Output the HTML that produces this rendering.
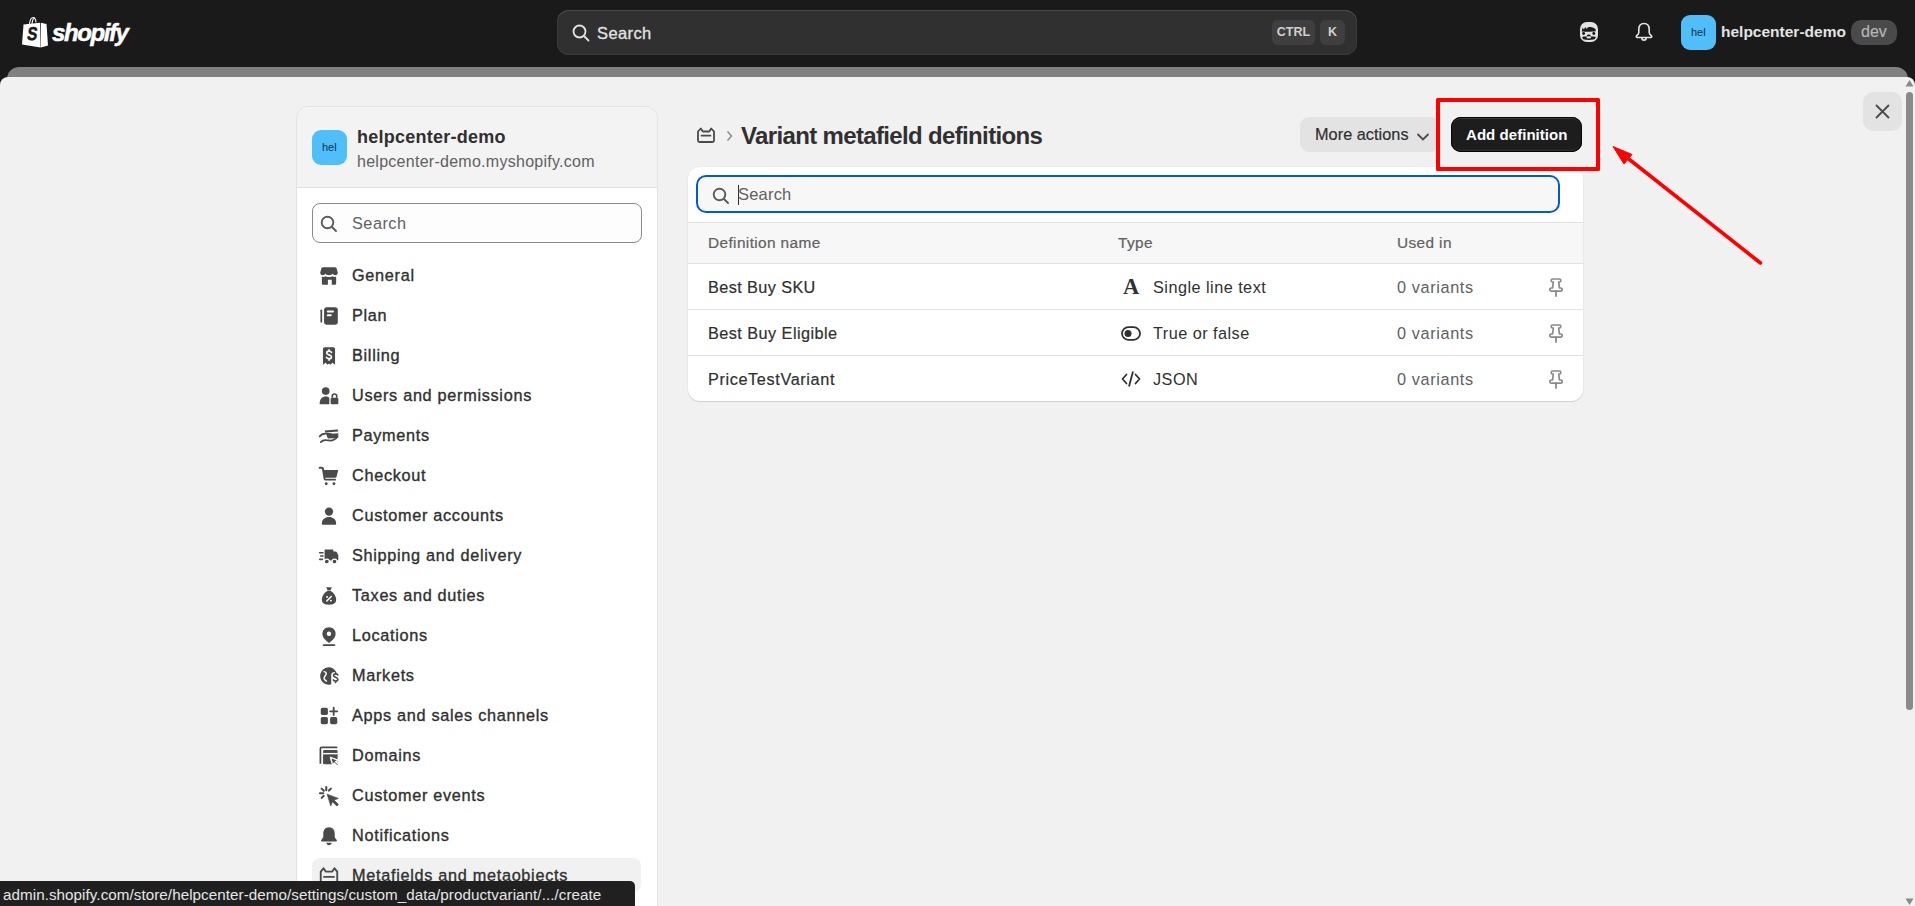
<!DOCTYPE html>
<html><head><meta charset="utf-8">
<style>
*{box-sizing:border-box;margin:0;padding:0}
html,body{width:1915px;height:906px;overflow:hidden;background:#1a1a1a;font-family:"Liberation Sans",sans-serif;color:#303030}
.abs{position:absolute}
.t{position:absolute;white-space:nowrap;line-height:1}
/* top bar */
#logo-bag{left:21px;top:16px}
#logo-txt{left:52px;top:21px;font-size:24px;font-weight:700;font-style:italic;color:#fff;letter-spacing:-1.4px;-webkit-text-stroke:0.5px #fff}
#gsearch{left:557px;top:10px;width:800px;height:45px;background:#303030;border-radius:12px;box-shadow:inset 0 1px 0 #4a4a4a,inset 0 0 0 1px #3a3a3a}
.kbd{position:absolute;top:10px;height:25px;background:#3f3f3f;border-radius:6px;color:#cfcfcf;font-size:12.5px;font-weight:700;line-height:25px;text-align:center}
#strip{left:7px;top:67px;width:1901px;height:30px;background:#808080;border-radius:12px 12px 0 0}
#modal{left:0;top:77px;width:1915px;height:840px;background:#f1f1f1;border-radius:8px 8px 0 0}
/* sidebar */
#side{left:297px;top:107px;width:360px;height:830px;background:#fff;border-radius:12px;box-shadow:0 0 0 1px #e3e3e3;overflow:hidden}
#side-h{left:0;top:0;width:360px;height:81px;background:#f3f3f3;border-bottom:1px solid #e3e3e3}
.nav{position:absolute;left:15px;width:329px;height:34px}
.nav svg{position:absolute;left:6px;top:7px}
.nav span{position:absolute;left:40px;top:9px;font-size:16.25px;letter-spacing:0.7px;color:#303030;white-space:nowrap;line-height:1;-webkit-text-stroke:0.35px #303030}
/* main */
#title{left:741px;top:124px;font-size:24px;font-weight:700;color:#303030;letter-spacing:-0.65px}
#more{left:1300px;top:117px;width:140px;height:35px;background:#e3e3e3;border-radius:9px}
#add{left:1451px;top:117px;width:131px;height:35px;background:#1d1d1d;border-radius:10px;box-shadow:inset 0 0 0 1px #050505,inset 0 2px 0 #3a3a3a,inset 0 -2.5px 0 #2c2c2c}
#redbox{left:1436px;top:97.5px;width:163.5px;height:73.5px;border:4px solid #f00;border-radius:1.5px}
#card{left:688px;top:167px;width:895px;height:234px;background:#fff;border-radius:12px;box-shadow:0 1px 1px rgba(0,0,0,.12),0 0 0 1px #ececec;overflow:hidden}
#tsearch{left:8px;top:8px;width:864px;height:38px;background:#f7f7f7;border:2px solid #005bd3;border-radius:10px}
#thead{left:0;top:55px;width:895px;height:42px;background:#f7f7f7;border-top:1px solid #e3e3e3;border-bottom:1px solid #e3e3e3}
.row{position:absolute;left:0;width:895px;height:46px;border-bottom:1px solid #e3e3e3}
.row .t{top:14.5px;font-size:16.25px;letter-spacing:0.3px}
#close{left:1863px;top:92px;width:39px;height:39px;background:#e3e3e3;border-radius:10px}
#sb-thumb{left:1906px;top:92px;width:7px;height:618px;background:#8a8a8a;border-radius:4px}
#status{left:0;top:881px;width:635px;height:25px;background:#202020;border-radius:0 5px 0 0}
#status span{position:absolute;left:3px;top:6px;font-size:15.2px;letter-spacing:0.06px;color:#e6e6e6;white-space:nowrap;line-height:1}
</style></head><body>

<!-- TOP BAR -->
<svg class="abs" id="logo-bag" width="28" height="32" viewBox="0 0 28 32">
  <path d="M2.5 8.5 L19 6.8 L19.5 31.5 L1 28.5 Z" fill="#fff"/>
  <path d="M19.8 6.8 L25.5 8 L27 29.5 L19.8 31.5 Z" fill="#fff"/>
  <path d="M8.5 8.5 C8.8 4 10.5 1.5 12.3 1.5 C13.8 1.5 14.8 3.5 15 6.5 M11 8 C11.3 4.5 12.3 2.5 13.5 2.2" stroke="#fff" stroke-width="1.1" fill="none"/>
  <text x="0" y="0" font-family="Liberation Sans" font-weight="700" font-size="18.5" fill="#1a1a1a" stroke="#1a1a1a" stroke-width="0.5" transform="translate(5.5,24.4) skewX(-8) scale(0.82,1)">S</text>
</svg>
<div class="t" id="logo-txt">shopify</div>

<div class="abs" id="gsearch">
  <svg class="abs" style="left:15px;top:14px" width="18" height="18" viewBox="0 0 18 18"><circle cx="7.5" cy="7.5" r="6" stroke="#e3e3e3" stroke-width="1.8" fill="none"/><path d="M12 12 L16.5 16.5" stroke="#e3e3e3" stroke-width="1.8" stroke-linecap="round"/></svg>
  <div class="t" style="left:40px;top:14.5px;font-size:16.5px;color:#e3e3e3;letter-spacing:0.4px;-webkit-text-stroke:0.3px #e3e3e3">Search</div>
  <div class="kbd" style="left:715px;width:43px">CTRL</div>
  <div class="kbd" style="left:763px;width:25px">K</div>
</div>

<!-- face icon -->
<svg class="abs" style="left:1578px;top:21px" width="22" height="22" viewBox="0 0 22 22">
  <rect x="2" y="1" width="18" height="20" rx="7" fill="#e3e3e3"/>
  <path d="M3.6 10.6 L4.6 6.6 L5.8 8.6 L7.4 6 L8.6 8 L10 6.3 C13 5.6 16.2 6.2 17.8 8.8 L17.6 10.3 C15.5 10.6 12.5 10.8 10.6 10.8 C8 10.8 5.5 10.8 3.6 10.6 Z" fill="#1a1a1a"/>
  <circle cx="5.6" cy="12.5" r="1.45" fill="#1a1a1a"/><circle cx="15.8" cy="12.5" r="1.45" fill="#1a1a1a"/>
  <ellipse cx="10.8" cy="14.6" rx="1.9" ry="1.1" fill="#1a1a1a"/>
  <path d="M4.2 16 C6.5 15.3 9 15.6 10.8 15.9 C12.6 15.6 15.2 15.3 17.8 16 C17.5 17.6 16.8 18.4 15.5 18.6 C12.5 19 9 19 6.2 18.6 C5 18.4 4.4 17.6 4.2 16 Z" fill="#1a1a1a"/>
  <ellipse cx="10.8" cy="16.5" rx="2.4" ry="1.1" fill="#e3e3e3"/>
</svg>
<!-- bell -->
<svg class="abs" style="left:1634px;top:22px" width="20" height="20" viewBox="0 0 20 20">
  <path d="M10 1.5 C6.5 1.5 4.8 4 4.8 7.5 L4.8 10.5 C4.8 12 3.5 12.8 2.5 14 C2 14.6 2.3 15.5 3.2 15.5 L16.8 15.5 C17.7 15.5 18 14.6 17.5 14 C16.5 12.8 15.2 12 15.2 10.5 L15.2 7.5 C15.2 4 13.5 1.5 10 1.5 Z" stroke="#e3e3e3" stroke-width="1.6" fill="none" stroke-linejoin="round"/>
  <path d="M7.8 16 C7.8 18.8 12.2 18.8 12.2 16" stroke="#e3e3e3" stroke-width="1.6" fill="none"/>
</svg>
<div class="abs" style="left:1681px;top:15px;width:35px;height:35px;background:#50bef9;border-radius:9px"></div>
<div class="t" style="left:1691px;top:27px;font-size:11px;color:#0b3050">hel</div>
<div class="t" style="left:1721px;top:24px;font-size:15.5px;font-weight:700;color:#e3e3e3">helpcenter-demo</div>
<div class="abs" style="left:1851px;top:20px;width:46px;height:25px;background:#4a4a4a;border-radius:10px"></div>
<div class="t" style="left:1861px;top:24px;font-size:16px;color:#b5b5b5;-webkit-text-stroke:0.2px #b5b5b5">dev</div>

<div class="abs" id="strip"></div>
<div class="abs" id="modal"></div>

<!-- SIDEBAR -->
<div class="abs" id="side">
  <div class="abs" id="side-h"></div>
  <div class="abs" style="left:15px;top:23px;width:35px;height:35px;background:#50bef9;border-radius:9px"></div>
  <div class="t" style="left:25px;top:34.5px;font-size:11px;color:#0b3050">hel</div>
  <div class="t" style="left:60px;top:21px;font-size:18px;font-weight:700;color:#303030;letter-spacing:0.25px">helpcenter-demo</div>
  <div class="t" style="left:60px;top:47px;font-size:16px;color:#616161;letter-spacing:0.27px">helpcenter-demo.myshopify.com</div>
  <div class="abs" style="left:15px;top:96px;width:330px;height:40px;border:1px solid #8a8a8a;border-radius:8px;background:#fdfdfd"></div>
  <svg class="abs" style="left:23px;top:108px" width="18" height="18" viewBox="0 0 18 18"><circle cx="7.5" cy="7.5" r="5.8" stroke="#5c5c5c" stroke-width="1.9" fill="none"/><path d="M12 12 L16 16" stroke="#5c5c5c" stroke-width="1.9" stroke-linecap="round"/></svg>
  <div class="t" style="left:55px;top:108px;font-size:16.25px;color:#616161;letter-spacing:0.5px">Search</div>
  <div class="nav" style="top:151px"><svg width="22" height="22" viewBox="0 0 20 20"><path d="M3 3.5 C3 2.7 3.6 2 4.5 2 L15.5 2 C16.4 2 17 2.7 17 3.5 L18 7 C18 8.5 16.8 9.3 15.6 9.3 C14.6 9.3 13.8 8.7 13.3 8 C12.8 8.7 11.9 9.3 10 9.3 C8.1 9.3 7.2 8.7 6.7 8 C6.2 8.7 5.4 9.3 4.4 9.3 C3.2 9.3 2 8.5 2 7 Z" fill="#4a4a4a"/><path d="M3.5 10.5 L3.5 16.5 C3.5 17.3 4.1 18 5 18 L9 18 L9 13.5 L12.5 13.5 L12.5 18 L15 18 C15.9 18 16.5 17.3 16.5 16.5 L16.5 10.5 C15.5 11 14 10.9 13.3 10.2 C12 11.2 8 11.2 6.7 10.2 C6 10.9 4.5 11 3.5 10.5 Z" fill="#4a4a4a"/></svg><span>General</span></div>
  <div class="nav" style="top:191px"><svg width="22" height="22" viewBox="0 0 20 20"><rect x="5.5" y="2" width="12.5" height="16" rx="2.5" fill="#4a4a4a"/><rect x="8" y="5" width="6.5" height="1.8" rx=".9" fill="#fff"/><rect x="8" y="8.5" width="4.5" height="1.8" rx=".9" fill="#fff"/><rect x="2.2" y="4" width="1.6" height="12" rx=".8" fill="#4a4a4a"/></svg><span>Plan</span></div>
  <div class="nav" style="top:231px"><svg width="22" height="22" viewBox="0 0 20 20"><path d="M4.5 3.5 C4.5 2.7 5.2 2 6 2 L14 2 C14.8 2 15.5 2.7 15.5 3.5 L15.5 18 L13.2 16.2 L11.2 18 L10 16.8 L8.8 18 L6.8 16.2 L4.5 18 Z" fill="#4a4a4a"/><path d="M12.2 6.8 C11.8 6 11 5.6 10 5.6 C8.8 5.6 7.9 6.3 7.9 7.3 C7.9 9.5 12.2 8.5 12.2 10.8 C12.2 11.8 11.2 12.4 10 12.4 C9 12.4 8.1 12 7.7 11.2 M10 4.3 L10 5.6 M10 12.4 L10 13.8" stroke="#fff" stroke-width="1.5" fill="none" stroke-linecap="round"/></svg><span>Billing</span></div>
  <div class="nav" style="top:271px"><svg width="22" height="22" viewBox="0 0 20 20"><circle cx="7" cy="5.5" r="3.5" fill="#4a4a4a"/><path d="M1.5 17 C1.5 12.5 4 10.5 7 10.5 C8.5 10.5 9.5 11 10.3 11.6 L10.3 17.5 L2 17.5 C1.7 17.5 1.5 17.3 1.5 17 Z" fill="#4a4a4a"/><rect x="11.5" y="11.5" width="7" height="6" rx="1.2" fill="#4a4a4a"/><path d="M13 11.5 L13 10 C13 8.8 13.8 8.2 15 8.2 C16.2 8.2 17 8.8 17 10 L17 11.5" stroke="#4a4a4a" stroke-width="1.5" fill="none"/></svg><span>Users and permissions</span></div>
  <div class="nav" style="top:311px"><svg width="22" height="22" viewBox="0 0 20 20"><path d="M6 5 L17.5 4 C18 4 18.3 4.3 18.3 4.8 L18.5 11 C18.5 11.5 18.2 11.8 17.7 11.8 L9 12.2" fill="#4a4a4a"/><path d="M7 6.8 L18.4 6 L18.4 7.6 L7 8.4 Z" fill="#fff"/><path d="M1.5 10.5 C3 8 5 7.5 8 7.8 L12 8.2 C13 8.3 13 9.8 12 9.8 L9 9.8 M2.5 15.5 C4 14 5.5 13.5 7.5 13.8 L11.5 14.2 C13 14.3 15 13 16.5 12" stroke="#4a4a4a" stroke-width="1.6" fill="none" stroke-linecap="round"/></svg><span>Payments</span></div>
  <div class="nav" style="top:351px"><svg width="22" height="22" viewBox="0 0 20 20"><path d="M1.5 2.5 L3.5 2.5 C4 2.5 4.4 2.8 4.5 3.3 L6 12.5 C6.1 13 6.5 13.3 7 13.3 L15.5 13.3" stroke="#4a4a4a" stroke-width="1.8" fill="none" stroke-linecap="round"/><path d="M5 4.5 L17.5 4.5 C18 4.5 18.4 5 18.2 5.5 L16.8 10.8 C16.7 11.2 16.3 11.5 15.8 11.5 L6.2 11.5 Z" fill="#4a4a4a"/><circle cx="7.5" cy="17" r="1.3" fill="#4a4a4a"/><circle cx="14.5" cy="17" r="1.3" fill="#4a4a4a"/></svg><span>Checkout</span></div>
  <div class="nav" style="top:391px"><svg width="22" height="22" viewBox="0 0 20 20"><circle cx="10" cy="6" r="3.8" fill="#4a4a4a"/><path d="M3.5 17 C3.5 13 6.5 11 10 11 C13.5 11 16.5 13 16.5 17 C16.5 17.5 16.2 18 15.7 18 L4.3 18 C3.8 18 3.5 17.5 3.5 17 Z" fill="#4a4a4a"/></svg><span>Customer accounts</span></div>
  <div class="nav" style="top:431px"><svg width="22" height="22" viewBox="0 0 20 20"><path d="M6 4 L13 4 C13.6 4 14 4.4 14 5 L14 6 L16 6 C16.5 6 16.9 6.2 17.1 6.6 L18.5 9.4 L18.5 13 C18.5 13.6 18.1 14 17.5 14 L6 14 Z" fill="#4a4a4a"/><circle cx="8" cy="15" r="2.2" fill="#4a4a4a" stroke="#fff" stroke-width="1"/><circle cx="15" cy="15" r="2.2" fill="#4a4a4a" stroke="#fff" stroke-width="1"/><path d="M1.5 7 L4.5 7 M2.5 10 L4.5 10 M1.5 13 L4 13" stroke="#4a4a4a" stroke-width="1.5" stroke-linecap="round"/></svg><span>Shipping and delivery</span></div>
  <div class="nav" style="top:471px"><svg width="22" height="22" viewBox="0 0 20 20"><path d="M7.5 2 L12.5 2 L11.3 5 L8.7 5 Z" fill="#4a4a4a"/><path d="M8.5 5.5 L11.5 5.5 C14.5 7 16.5 10.5 16.5 13.5 C16.5 16.5 14 18 10 18 C6 18 3.5 16.5 3.5 13.5 C3.5 10.5 5.5 7 8.5 5.5 Z" fill="#4a4a4a"/><path d="M8 14.5 L12 10.5" stroke="#fff" stroke-width="1.4" stroke-linecap="round"/><circle cx="8.3" cy="10.8" r=".9" fill="#fff"/><circle cx="11.7" cy="14.2" r=".9" fill="#fff"/></svg><span>Taxes and duties</span></div>
  <div class="nav" style="top:511px"><svg width="22" height="22" viewBox="0 0 20 20"><path d="M10 2 C6.5 2 4 4.6 4 8 C4 11.5 7 14 9.3 15.8 C9.7 16.1 10.3 16.1 10.7 15.8 C13 14 16 11.5 16 8 C16 4.6 13.5 2 10 2 Z" fill="#4a4a4a"/><circle cx="10" cy="8" r="2" fill="#fff"/><path d="M5 18.2 L15 18.2" stroke="#4a4a4a" stroke-width="1.6" stroke-linecap="round"/></svg><span>Locations</span></div>
  <div class="nav" style="top:551px"><svg width="22" height="22" viewBox="0 0 20 20"><path d="M10 2 C5.6 2 2 5.6 2 10 C2 14.4 5.6 18 10 18 C11 18 11.5 17.8 12 17.6 L12 9 C12 7.5 13.3 6.3 14.8 6.3 L16.5 6.3 C15 3.7 12.7 2 10 2 Z" fill="#4a4a4a"/><path d="M5 6 C6.5 6 7.5 7 7.5 8 C7.5 9.5 5.5 10 5.5 12 C5.5 13.5 7 14 8 15" stroke="#fff" stroke-width="1.3" fill="none"/><path d="M18 9 C17.5 8.3 16.8 8 16 8 C15 8 14.2 8.6 14.2 9.5 C14.2 11.5 18 10.8 18 13 C18 14 17 14.6 16 14.6 C15 14.6 14.3 14.2 13.9 13.5 M16 6.8 L16 8 M16 14.6 L16 16" stroke="#4a4a4a" stroke-width="1.5" fill="none" stroke-linecap="round"/></svg><span>Markets</span></div>
  <div class="nav" style="top:591px"><svg width="22" height="22" viewBox="0 0 20 20"><rect x="2.5" y="2.5" width="6.5" height="6.5" rx="1.5" fill="#4a4a4a"/><rect x="2.5" y="11" width="6.5" height="6.5" rx="1.5" fill="#4a4a4a"/><rect x="11" y="11" width="6.5" height="6.5" rx="1.5" fill="#4a4a4a"/><path d="M14.25 2.5 L14.25 9 M11 5.75 L17.5 5.75" stroke="#4a4a4a" stroke-width="1.7" stroke-linecap="round"/></svg><span>Apps and sales channels</span></div>
  <div class="nav" style="top:631px"><svg width="22" height="22" viewBox="0 0 20 20"><path d="M2.2 17 L2.2 3.2 C2.2 2.6 2.6 2.2 3.2 2.2 L17.5 2.2" stroke="#4a4a4a" stroke-width="1.6" fill="none"/><rect x="4.6" y="4.6" width="13.2" height="13" rx="1.2" fill="#4a4a4a"/><rect x="4.6" y="7.2" width="13.2" height="1.3" fill="#fff"/><path d="M11.3 11.2 L18.8 14 L16 15.1 L18.9 18 L17.6 19.3 L14.7 16.4 L13.6 19.2 Z" fill="#4a4a4a" stroke="#fff" stroke-width="1.3" stroke-linejoin="round"/></svg><span>Domains</span></div>
  <div class="nav" style="top:671px"><svg width="22" height="22" viewBox="0 0 20 20"><path d="M8.3 8.3 L18.5 12.2 L14.6 13.7 L18.6 17.7 L17.1 19.2 L13.1 15.2 L11.6 19.1 Z" fill="#4a4a4a" stroke="#4a4a4a" stroke-width="0.6" stroke-linejoin="round"/><path d="M7.5 1.8 L7.5 4.8 M1.8 7.5 L4.8 7.5 M3.3 3.3 L5.3 5.3 M11.7 3.3 L9.9 5.1 M3.3 11.7 L5.1 9.9" stroke="#4a4a4a" stroke-width="1.9" stroke-linecap="round"/></svg><span>Customer events</span></div>
  <div class="nav" style="top:711px"><svg width="22" height="22" viewBox="0 0 20 20"><path d="M10 2 C6.8 2 4.8 4.5 4.8 7.8 L4.8 10.5 C4.8 11.8 3.8 12.6 3 13.6 C2.5 14.3 3 15 3.8 15 L16.2 15 C17 15 17.5 14.3 17 13.6 C16.2 12.6 15.2 11.8 15.2 10.5 L15.2 7.8 C15.2 4.5 13.2 2 10 2 Z" fill="#4a4a4a"/><path d="M7.5 16.2 C7.8 17.6 8.8 18.3 10 18.3 C11.2 18.3 12.2 17.6 12.5 16.2 Z" fill="#4a4a4a"/></svg><span>Notifications</span></div>
  <div class="nav" style="top:751px;background:#f1f1f1;border-radius:8px"><svg width="22" height="22" viewBox="0 0 20 20"><path d="M2.5 6 L2.5 16 C2.5 17 3.3 17.5 4.2 17.5 L15.8 17.5 C16.7 17.5 17.5 17 17.5 16 L17.5 6 L15 3 L13 6 L7 6 L5 3 Z" stroke="#4a4a4a" stroke-width="1.7" fill="none" stroke-linejoin="round"/><path d="M5.5 10.8 L14.5 10.8" stroke="#4a4a4a" stroke-width="1.7" stroke-linecap="round"/></svg><span>Metafields and metaobjects</span></div>
</div>

<!-- MAIN -->
<svg class="abs" style="left:696px;top:126px" width="20" height="18" viewBox="0 0 20 18">
  <path d="M2 5.5 L2 14.8 C2 15.6 2.8 16 3.6 16 L16.4 16 C17.2 16 18 15.6 18 14.8 L18 5.5 L15.2 2.5 L13.2 5.5 L6.8 5.5 L4.8 2.5 Z" stroke="#4a4a4a" stroke-width="1.8" fill="none" stroke-linejoin="round"/>
  <path d="M5.5 9.6 L14.5 9.6" stroke="#4a4a4a" stroke-width="1.8" stroke-linecap="round"/>
</svg>
<svg class="abs" style="left:725px;top:130px" width="9" height="12" viewBox="0 0 9 12"><path d="M2.5 1.5 L6.5 6 L2.5 10.5" stroke="#8a8a8a" stroke-width="1.4" fill="none"/></svg>
<div class="t" id="title">Variant metafield definitions</div>

<div class="abs" id="more">
  <div class="t" style="left:15px;top:9px;font-size:16.25px;color:#303030;letter-spacing:0.05px;-webkit-text-stroke:0.2px #303030">More actions</div>
  <svg class="abs" style="left:116px;top:14.5px" width="14" height="10" viewBox="0 0 14 10"><path d="M2 2.5 L7 7.5 L12 2.5" stroke="#4a4a4a" stroke-width="1.8" fill="none" stroke-linecap="round"/></svg>
</div>
<div class="abs" id="add">
  <div class="t" style="left:15px;top:10px;font-size:15px;font-weight:700;color:#fff;letter-spacing:0.05px">Add definition</div>
</div>


<div class="abs" id="card">
  <div class="abs" id="tsearch"></div>
  <svg class="abs" style="left:24px;top:19.5px" width="18" height="18" viewBox="0 0 18 18"><circle cx="7.5" cy="7.5" r="5.8" stroke="#5c5c5c" stroke-width="1.9" fill="none"/><path d="M12 12 L16 16" stroke="#5c5c5c" stroke-width="1.9" stroke-linecap="round"/></svg>
  <div class="abs" style="left:50px;top:18px;width:1.3px;height:20px;background:#303030"></div>
  <div class="t" style="left:50px;top:19px;font-size:16.5px;color:#616161;letter-spacing:0.2px">Search</div>
  <div class="abs" id="thead"></div>
  <div class="t" style="left:20px;top:68px;font-size:15.4px;color:#616161;letter-spacing:0.38px;-webkit-text-stroke:0.2px #616161">Definition name</div>
  <div class="t" style="left:430px;top:68px;font-size:15.4px;color:#616161;letter-spacing:0.38px;-webkit-text-stroke:0.2px #616161">Type</div>
  <div class="t" style="left:709px;top:68px;font-size:15.4px;color:#616161;letter-spacing:0.38px;-webkit-text-stroke:0.2px #616161">Used in</div>
  <div class="row" style="top:97px"><div class="t" style="left:20px;color:#303030;letter-spacing:0.4px;-webkit-text-stroke:0.2px #303030">Best Buy SKU</div><div class="t" style="left:435px;top:12px;font-family:'Liberation Serif';font-weight:700;font-size:22.5px;color:#303030">A</div><div class="t" style="left:465px;color:#303030;letter-spacing:0.47px">Single line text</div><div class="t" style="left:709px;color:#616161;letter-spacing:0.63px">0 variants</div><svg class="abs" style="left:859px;top:13px" width="18" height="20" viewBox="0 0 18 20"><path d="M6.3 5 L5.6 5 C4.7 5 4.2 4.3 4.2 3.5 C4.2 2.6 4.8 2 5.6 2 L12.4 2 C13.2 2 13.8 2.6 13.8 3.5 C13.8 4.3 13.3 5 12.4 5 L11.7 5 L12.4 11 L13.5 11 C14.5 11 15.2 11.7 15.2 12.6 C15.2 13.5 14.5 14.2 13.5 14.2 L4.5 14.2 C3.5 14.2 2.8 13.5 2.8 12.6 C2.8 11.7 3.5 11 4.5 11 L5.6 11 Z" fill="none" stroke="#8a8a8a" stroke-width="1.7" stroke-linejoin="round"/><path d="M9 14.2 L9 19" stroke="#8a8a8a" stroke-width="1.8" stroke-linecap="round"/></svg></div>
  <div class="row" style="top:143px"><div class="t" style="left:20px;color:#303030;letter-spacing:0.45px;-webkit-text-stroke:0.2px #303030">Best Buy Eligible</div><svg class="abs" style="left:433px;top:16px" width="20" height="15" viewBox="0 0 20 15"><rect x="1" y="1.2" width="18" height="12.6" rx="6.3" stroke="#303030" stroke-width="1.8" fill="none"/><circle cx="7" cy="7.5" r="3.5" fill="#303030"/></svg><div class="t" style="left:465px;color:#303030;letter-spacing:0.47px">True or false</div><div class="t" style="left:709px;color:#616161;letter-spacing:0.63px">0 variants</div><svg class="abs" style="left:859px;top:13px" width="18" height="20" viewBox="0 0 18 20"><path d="M6.3 5 L5.6 5 C4.7 5 4.2 4.3 4.2 3.5 C4.2 2.6 4.8 2 5.6 2 L12.4 2 C13.2 2 13.8 2.6 13.8 3.5 C13.8 4.3 13.3 5 12.4 5 L11.7 5 L12.4 11 L13.5 11 C14.5 11 15.2 11.7 15.2 12.6 C15.2 13.5 14.5 14.2 13.5 14.2 L4.5 14.2 C3.5 14.2 2.8 13.5 2.8 12.6 C2.8 11.7 3.5 11 4.5 11 L5.6 11 Z" fill="none" stroke="#8a8a8a" stroke-width="1.7" stroke-linejoin="round"/><path d="M9 14.2 L9 19" stroke="#8a8a8a" stroke-width="1.8" stroke-linecap="round"/></svg></div>
  <div class="row" style="top:189px"><div class="t" style="left:20px;color:#303030;letter-spacing:0.62px;-webkit-text-stroke:0.2px #303030">PriceTestVariant</div><svg class="abs" style="left:433px;top:15px" width="20" height="16" viewBox="0 0 20 16"><path d="M5.5 3.5 L1.5 8 L5.5 12.5 M14.5 3.5 L18.5 8 L14.5 12.5 M11.8 1.2 L8.2 14.8" stroke="#303030" stroke-width="1.8" fill="none" stroke-linecap="round" stroke-linejoin="round"/></svg><div class="t" style="left:465px;color:#303030;letter-spacing:0.47px">JSON</div><div class="t" style="left:709px;color:#616161;letter-spacing:0.63px">0 variants</div><svg class="abs" style="left:859px;top:13px" width="18" height="20" viewBox="0 0 18 20"><path d="M6.3 5 L5.6 5 C4.7 5 4.2 4.3 4.2 3.5 C4.2 2.6 4.8 2 5.6 2 L12.4 2 C13.2 2 13.8 2.6 13.8 3.5 C13.8 4.3 13.3 5 12.4 5 L11.7 5 L12.4 11 L13.5 11 C14.5 11 15.2 11.7 15.2 12.6 C15.2 13.5 14.5 14.2 13.5 14.2 L4.5 14.2 C3.5 14.2 2.8 13.5 2.8 12.6 C2.8 11.7 3.5 11 4.5 11 L5.6 11 Z" fill="none" stroke="#8a8a8a" stroke-width="1.7" stroke-linejoin="round"/><path d="M9 14.2 L9 19" stroke="#8a8a8a" stroke-width="1.8" stroke-linecap="round"/></svg></div>
</div>

<div class="abs" id="redbox"></div>
<svg class="abs" style="left:0;top:0" width="1915" height="906" viewBox="0 0 1915 906">
  <path d="M1760.5 263 L1625 156" stroke="#f00" stroke-width="3.6" stroke-linecap="round"/>
  <path d="M1613 146.5 L1632 154.5 L1624 164 Z" fill="#f00" stroke="#f00" stroke-width="1"/>
</svg>

<div class="abs" id="close">
  <svg class="abs" style="left:12px;top:12px" width="15" height="15" viewBox="0 0 15 15"><path d="M1 1 L14 14 M14 1 L1 14" stroke="#4a4a4a" stroke-width="1.8"/></svg>
</div>
<svg class="abs" style="left:1905px;top:79px" width="9" height="8" viewBox="0 0 9 8"><path d="M0.5 7.5 L4.5 1 L8.5 7.5 Z" fill="#8a8a8a"/></svg>
<div class="abs" id="sb-thumb"></div>
<svg class="abs" style="left:1905px;top:898px" width="9" height="8" viewBox="0 0 9 8"><path d="M0.5 0.5 L4.5 7 L8.5 0.5 Z" fill="#8a8a8a"/></svg>

<div class="abs" id="status"><span>admin.shopify.com/store/helpcenter-demo/settings/custom_data/productvariant/.../create</span></div>
</body></html>
